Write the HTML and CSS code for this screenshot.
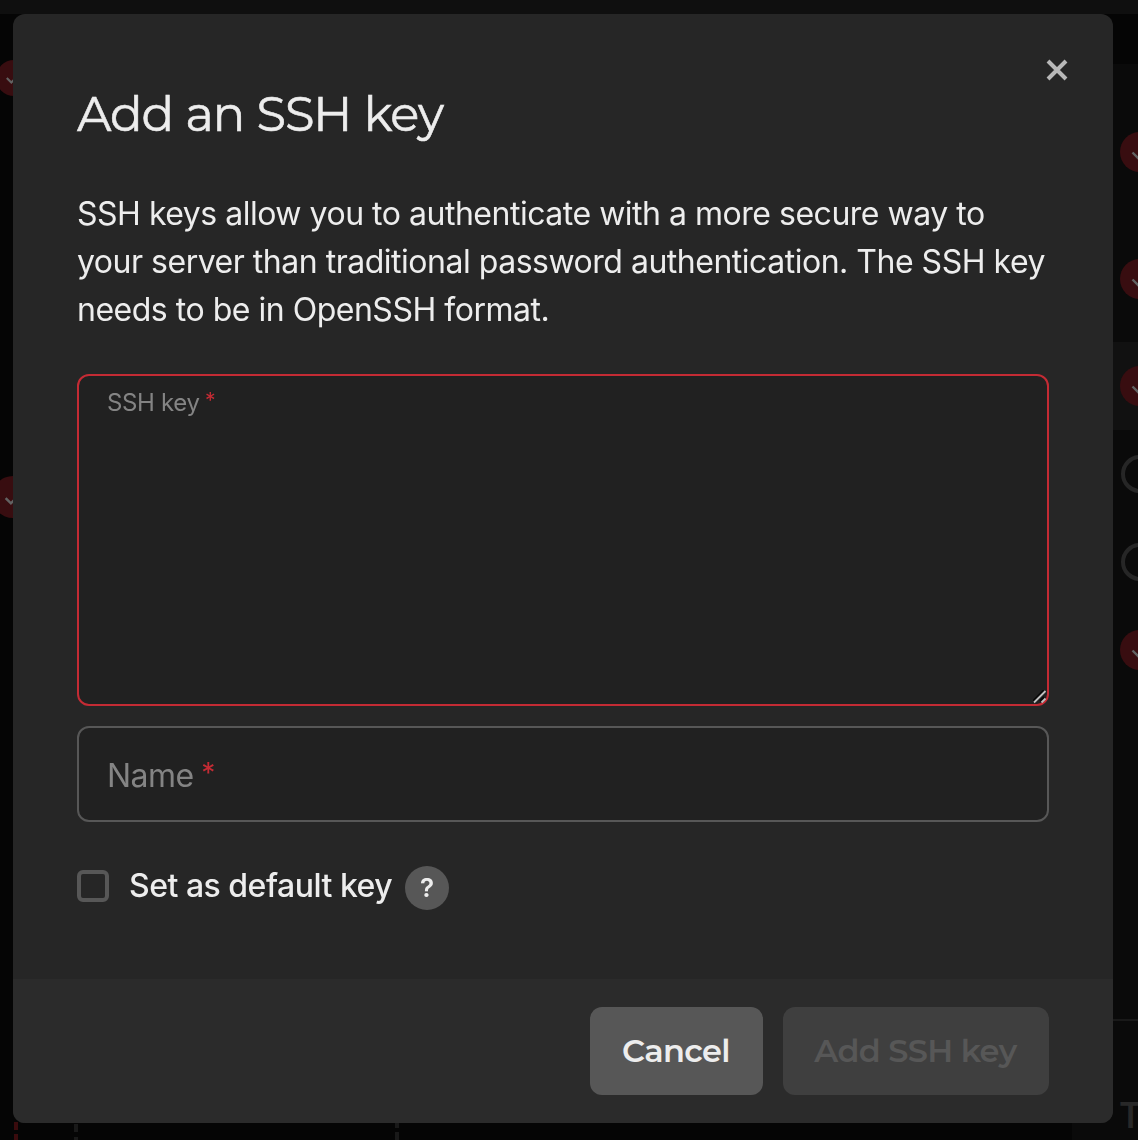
FILE: index.html
```html
<!DOCTYPE html>
<html lang="en">
<head>
  <meta charset="UTF-8" />
  <meta name="viewport" content="width=device-width, initial-scale=1" />
  <title>Add an SSH key</title>
  <link rel="stylesheet" href="styles.css">
</head>
<body>
  <!-- dimmed page -->
  <div class="page">
    <div class="topbar"></div>
    <div class="content">
      <div class="steps">
        <span class="dot dot-small"><svg viewBox="0 0 40 40"><path d="M12 20l5 5 9-9" /></svg></span>
        <span class="dot dot-large"><svg viewBox="0 0 40 40"><path d="M13 21l5 5 9-9" /></svg></span>
      </div>
      <div class="dashes">
        <span class="dash dash-red"></span>
        <span class="dash dash-a"></span>
        <span class="dash dash-b"></span>
      </div>
      <div class="side">
        <div class="row row-tall"><span class="dot"><svg viewBox="0 0 40 40"><path d="M12.500 20.500l6 6 10-12" /></svg></span></div>
        <div class="row row-mid"><span class="dot"><svg viewBox="0 0 40 40"><path d="M12.500 20.500l6 6 10-12" /></svg></span></div>
        <div class="row row-active"><span class="dot"><svg viewBox="0 0 40 40"><path d="M12.500 20.500l6 6 10-12" /></svg></span></div>
        <div class="row"><span class="ring"></span></div>
        <div class="row"><span class="ring"></span></div>
        <div class="row"><span class="dot"><svg viewBox="0 0 40 40"><path d="M12.500 20.500l6 6 10-12" /></svg></span></div>
        <div class="total">T</div>
      </div>
    </div>
  </div>

  <div class="overlay">
    <form class="modal">
      <div class="modal-body">
        <button type="button" class="close" aria-label="Close">
          <svg width="22" height="22" viewBox="0 0 22 22"><path d="M2 2l18 18M20 2L2 20" /></svg>
        </button>
        <h1>Add an SSH key</h1>
        <p>SSH keys allow you to authenticate with a more secure way to<br>your server than traditional password authentication. The SSH key<br>needs to be in OpenSSH format.</p>

        <div class="field">
          <textarea id="key" name="key"></textarea>
          <label for="key" class="label-small">SSH key <span class="star">*</span></label>
          <svg class="grip" width="14" height="14" viewBox="0 0 14 14"><path class="grip-shade" d="M0 11L11 0M7 11l4-4" /><path d="M1 12.500L12.500 1M8.500 12.500l4-4" /></svg>
        </div>

        <div class="field">
          <input type="text" id="name" name="name">
          <label for="name" class="label-big">Name <span class="star">*</span></label>
        </div>

        <div class="default-key">
          <input type="checkbox" id="default">
          <label for="default">Set as default key</label>
          <span class="help">?</span>
        </div>
      </div>
      <div class="modal-footer">
        <button type="button" class="btn cancel">Cancel</button>
        <button type="submit" class="btn add" disabled>Add SSH key</button>
      </div>
    </form>
  </div>
</body>
</html>
```
FILE: styles.css
```css
* {
  box-sizing: border-box;
}
body {
  margin: 0;
  height: 1140px;
  overflow: hidden;
  background: #050505;
  color: #ededed;
  font-family: Inter, sans-serif;
}
.page {
  height: 1140px;
  display: flex;
  flex-direction: column;
  overflow: hidden;
}
.topbar {
  height: 14px;
  flex: none;
  background: #0f0f0f;
}
.content {
  flex: 1;
  display: grid;
  grid-template-columns: 14px 1058px 66px;
}
.steps {
  padding-top: 46px;
  display: flex;
  flex-direction: column;
  align-items: center;
}
.dot {
  width: 40px;
  height: 40px;
  flex: none;
  border-radius: 50%;
  background: #380d10;
}
.dot svg {
  display: block;
  width: 100%;
  height: 100%;
  fill: none;
  stroke: #626262;
  stroke-width: 2.4;
}
.dot-small {
  width: 36px;
  height: 36px;
  margin-left: 14px;
}
.dot-large {
  width: 42px;
  height: 42px;
  margin-top: 380px;
  margin-left: 11px;
}
.dashes {
  display: flex;
  align-items: flex-end;
}
.dash {
  width: 4px;
  height: 18px;
}
.dash-red {
  background: linear-gradient(#3a0b0d 8px, transparent 8px 12px, #3a0b0d 12px);
}
.dash-a {
  margin-left: 56px;
  background: linear-gradient(transparent 2px, #191919 2px 10px, transparent 10px 15px, #191919 15px);
}
.dash-b {
  margin-left: 317px;
  background: linear-gradient(#191919 6px, transparent 6px 10px, #191919 10px);
}
.side {
  margin-top: 50px;
  padding-top: 24px;
  background: #0a0a0a;
}
.row {
  height: 88px;
  padding-left: 48px;
  display: flex;
  align-items: center;
}
.row-tall {
  height: 128px;
}
.row-mid {
  height: 126px;
}
.row-active {
  background: #111;
}
.ring {
  width: 38px;
  height: 38px;
  flex: none;
  margin-left: 1px;
  border: 4px solid #262626;
  border-radius: 50%;
}
.total {
  margin-top: 325px;
  padding: 74px 0 0 47px;
  border-top: 2px solid #191919;
  font-size: 35px;
  line-height: 40px;
  font-weight: 600;
  color: #282828;
}

.overlay {
  position: fixed;
  inset: 0;
  padding: 14px 25px 17px 13px;
}
.modal {
  height: 100%;
  display: flex;
  flex-direction: column;
  border-radius: 12px;
  overflow: hidden;
  background: #262626;
}
.modal-body {
  position: relative;
  flex: 1;
  padding: 70px 64px 0;
}
.close {
  position: absolute;
  top: 45px;
  right: 45px;
  padding: 0;
  border: none;
  background: none;
  cursor: pointer;
}
.close svg {
  display: block;
  fill: none;
  stroke: #b8b8b8;
  stroke-width: 4;
}
h1 {
  margin: 0;
  font-family: Montserrat, Inter, sans-serif;
  font-size: 48px;
  line-height: 60px;
  font-weight: 400;
  letter-spacing: -1.1px;
  word-spacing: 1px;
  -webkit-text-stroke: 0.6px #ededed;
}
p {
  margin: 46px 0 40px;
  font-size: 32px;
  line-height: 48px;
  letter-spacing: -0.485px;
  white-space: nowrap;
}
.field {
  position: relative;
  margin-bottom: 20px;
}
.field textarea,
.field input {
  display: block;
  width: 100%;
  padding: 30px;
  border: 2px solid #575757;
  border-radius: 12px;
  outline: none;
  background: #212121;
  color: #ededed;
  font: 32px Inter, sans-serif;
}
.field textarea {
  height: 332px;
  border-color: #c42b34;
  resize: none;
}
.field input {
  height: 96px;
}
.field label {
  position: absolute;
  left: 30px;
  color: #848484;
}
.label-small {
  top: 14px;
  font-size: 24px;
  line-height: 30px;
  letter-spacing: -0.36px;
}
.label-big {
  top: 30px;
  font-size: 32px;
  line-height: 40px;
  letter-spacing: -0.5px;
}
.star {
  margin-left: -1px;
  color: #c42b34;
  font-size: 0.88em;
  line-height: 1;
  vertical-align: 0.13em;
}
.grip {
  position: absolute;
  right: 2px;
  bottom: 2px;
  fill: none;
  stroke: #c0c0c0;
  stroke-width: 1.8;
}
.grip-shade {
  stroke: #080808;
}
.default-key {
  margin-top: 44px;
  height: 44px;
  display: flex;
  align-items: center;
  font-size: 32px;
  line-height: 44px;
  font-weight: 500;
}
.default-key input {
  appearance: none;
  width: 32px;
  height: 32px;
  margin: 0 20px 4px 0;
  border: 4px solid #575757;
  border-radius: 6px;
}
.default-key label {
  margin-bottom: 4px;
  letter-spacing: -0.5px;
}
.help {
  width: 44px;
  height: 44px;
  margin-left: 13px;
  border-radius: 50%;
  background: #575757;
  font-size: 26px;
  font-weight: 600;
  text-align: center;
}
.modal-footer {
  height: 144px;
  padding: 28px 64px;
  display: flex;
  justify-content: flex-end;
  gap: 20px;
  background: #2b2b2b;
}
.btn {
  height: 88px;
  padding: 0 1px 2px 0;
  border: none;
  border-radius: 12px;
  background: #575757;
  color: #ededed;
  font-family: Montserrat, Inter, sans-serif;
  font-size: 32px;
  font-weight: 600;
  letter-spacing: -0.65px;
  cursor: pointer;
}
.cancel {
  width: 173px;
}
.add {
  width: 266px;
  background: #3f3f3f;
  color: #575757;
}
```
